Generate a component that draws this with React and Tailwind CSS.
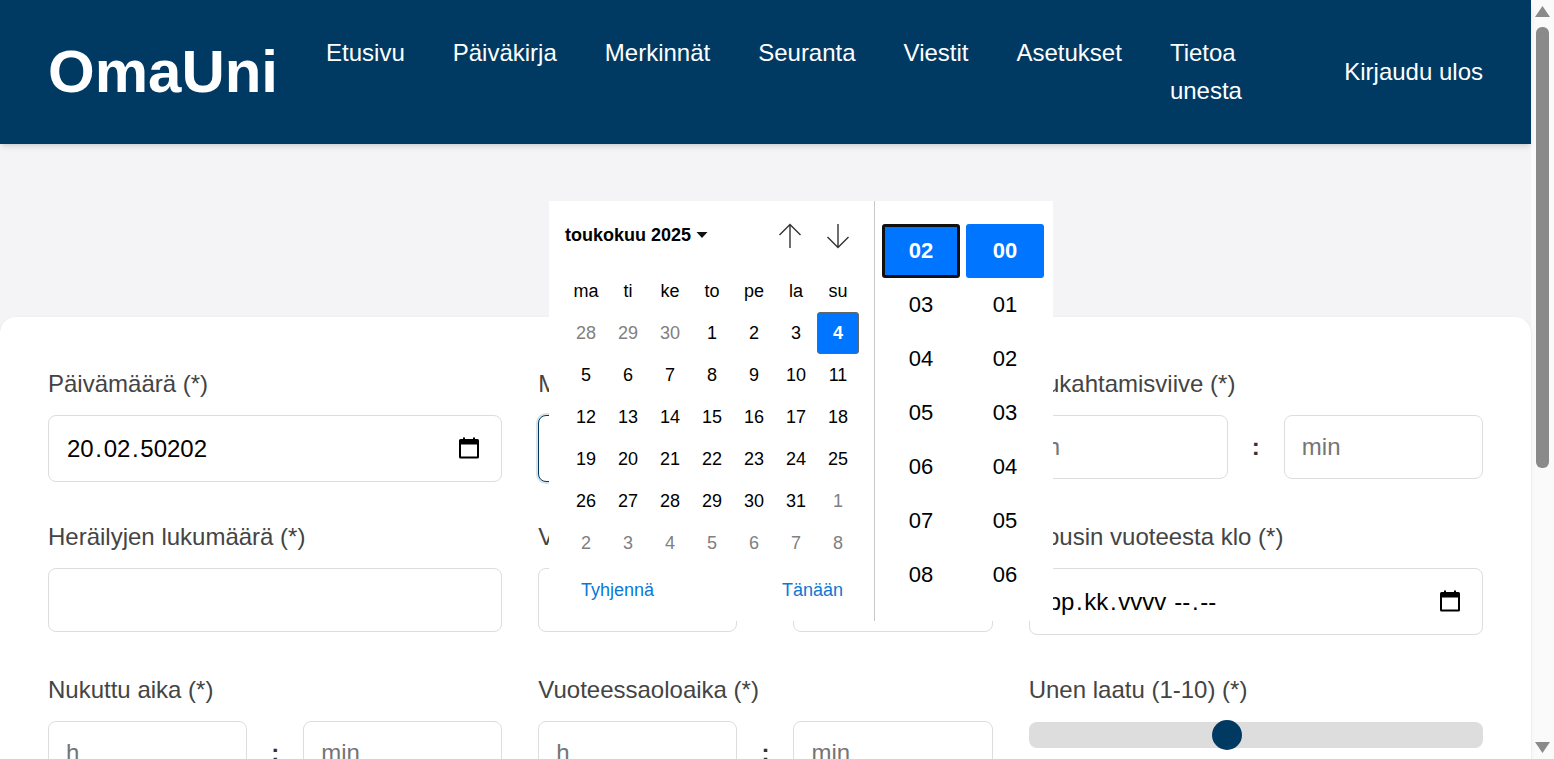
const navItems = ["Etusivu", "Päiväkirja", "Merkinnät", "Seuranta", "Viestit", "Asetukset"];
const weekdays = ["ma", "ti", "ke", "to", "pe", "la", "su"];
const days = [
  [28, true], [29, true], [30, true], [1], [2], [3], [4],
  [5], [6], [7], [8], [9], [10], [11],
  [12], [13], [14], [15], [16], [17], [18],
  [19], [20], [21], [22], [23], [24], [25],
  [26], [27], [28], [29], [30], [31], [1, true],
  [2, true], [3, true], [4, true], [5, true], [6, true], [7, true], [8, true],
];
const hours = ["02", "03", "04", "05", "06", "07", "08"];
const minutes = ["00", "01", "02", "03", "04", "05", "06"];

function CalendarIcon() {
  return (
    <svg width="24" height="24" viewBox="0 0 24 24" className="shrink-0 -mt-0.5">
      <path d="M7 1.500v2M17 1.500v2" stroke="#000" strokeWidth="2" fill="none" />
      <path
        d="M3.500 3h17A1.500 1.500 0 0 1 22 4.500V21a1.500 1.500 0 0 1-1.500 1.500h-17A1.500 1.500 0 0 1 2 21V4.500A1.500 1.500 0 0 1 3.500 3ZM4 8.500V20.500H20V8.500Z"
        fill="#000"
        fillRule="evenodd"
      />
    </svg>
  );
}

function Label({ children }) {
  return <label className="block h-[38px] mb-3 text-2xl leading-[38px] text-[#444] whitespace-nowrap">{children}</label>;
}

function TextInput({ placeholder }) {
  return (
    <input
      placeholder={placeholder}
      className="w-full min-w-0 h-16 px-[17px] bg-white border border-[#ddd] rounded-lg text-2xl placeholder:text-[#757575] outline-none"
    />
  );
}

function TimePair() {
  return (
    <div className="flex items-center gap-6">
      <TextInput placeholder="h" />
      <span className="shrink-0 text-2xl font-bold text-[#333]">:</span>
      <TextInput placeholder="min" />
    </div>
  );
}

function DateField({ parts, time, focused }) {
  return (
    <div
      className={
        "flex items-center justify-between h-[67px] pl-[18px] pr-5 bg-white border rounded-lg text-2xl text-black " +
        (focused ? "border-[#003a63] ring-2 ring-[#003a63]/15" : "border-[#ddd]")
      }
    >
      <span className="whitespace-nowrap">
        {parts[0]}
        <span className="mx-[1.650px]">.</span>
        {parts[1]}
        <span className="mx-[1.650px]">.</span>
        {parts[2]}
        {time && (
          <span className="ml-2">
            --<span className="mx-[1.650px]">.</span>--
          </span>
        )}
      </span>
      <CalendarIcon />
    </div>
  );
}

function TimeColumn({ values, focused }) {
  return (
    <div className="w-[78px] flex flex-col items-stretch">
      {values.map((v, i) => (
        <div
          key={v}
          className={
            "h-[54px] shrink-0 flex items-center justify-center pb-0.5 text-[22px] rounded-[3px] " +
            (i === 0 ? "bg-[#0075ff] text-white font-bold " : "text-black ") +
            (i === 0 && focused ? "border-[3px] border-[#101010]" : "")
          }
        >
          {v}
        </div>
      ))}
    </div>
  );
}

function DatePopup() {
  return (
    <div className="absolute left-[549px] top-[201px] w-[504px] h-[420px] bg-white flex overflow-hidden">
      <div className="w-[326px] shrink-0 border-r border-[#c8c8c8] pl-4 pr-4 flex flex-col">
        <div className="h-[69px] flex items-center">
          <div className="flex items-center -mt-0.5">
            <span className="text-lg font-bold text-black">toukokuu 2025</span>
            <svg width="12" height="6" viewBox="0 0 12 6" className="ml-[5px]">
              <path d="M0.500 0h11L6 6Z" fill="#111" />
            </svg>
          </div>
          <div className="ml-auto flex gap-6 pr-2">
            <svg width="24" height="26" viewBox="0 0 24 26" fill="none" stroke="#333" strokeWidth="1.400">
              <path d="M12 25V1.500M1.500 12 12 1.500 22.500 12" />
            </svg>
            <svg width="24" height="26" viewBox="0 0 24 26" fill="none" stroke="#333" strokeWidth="1.400">
              <path d="M12 1v23.500M1.500 14 12 24.500 22.500 14" />
            </svg>
          </div>
        </div>
        <div className="grid grid-cols-[repeat(7,42px)] auto-rows-[42px] text-lg">
          {weekdays.map((d) => (
            <div key={d} className="flex items-center justify-center text-black">{d}</div>
          ))}
          {days.map(([n, muted], i) => (
            <div
              key={i}
              className={
                "flex items-center justify-center " +
                (i === 6
                  ? "bg-[#0075ff] text-white font-bold border border-[#666] rounded-[3px]"
                  : muted
                    ? "text-[#808080]"
                    : "text-black")
              }
            >
              {n}
            </div>
          ))}
        </div>
        <div className="flex justify-between pl-4 pr-[15px] mt-3 text-lg text-[#0a78d6]">
          <span>Tyhjennä</span>
          <span>Tänään</span>
        </div>
      </div>
      <div className="flex gap-1.5 pl-[7px] pt-[23px]">
        <TimeColumn values={hours} focused />
        <TimeColumn values={minutes} />
      </div>
    </div>
  );
}

export default function App() {
  return (
    <div className="relative flex h-[759px] overflow-hidden bg-[#fafafa] font-['Liberation_Sans',Arial,sans-serif]">
      <div className="w-[1531px] shrink-0 bg-[#f4f4f6]">
        <header className="relative h-36 px-12 flex items-center gap-12 bg-[#003a63] text-white shadow-md">
          <div className="text-[60px] font-bold leading-none">OmaUni</div>
          <nav className="flex items-start gap-12 text-2xl leading-[38px]">
            {navItems.map((item) => (
              <a key={item}>{item}</a>
            ))}
            <a className="w-min">Tietoa unesta</a>
          </nav>
          <a className="ml-auto text-2xl leading-[38px]">Kirjaudu ulos</a>
        </header>
        <main className="pt-[173px]">
          <div className="h-[600px] p-12 bg-white rounded-t-2xl shadow-sm">
            <div className="grid grid-cols-3 gap-x-9 gap-y-9 items-start">
              <div>
                <Label>Päivämäärä (*)</Label>
                <DateField parts={["20", "02", "50202"]} />
              </div>
              <div>
                <Label>Menin nukkumaan klo (*)</Label>
                <DateField parts={["pp", "kk", "vvvv"]} time focused />
              </div>
              <div>
                <Label>Nukahtamisviive (*)</Label>
                <TimePair />
              </div>
              <div>
                <Label>Heräilyjen lukumäärä (*)</Label>
                <TextInput />
              </div>
              <div>
                <Label>Valveillaoloaika (*)</Label>
                <TimePair />
              </div>
              <div>
                <Label>Nousin vuoteesta klo (*)</Label>
                <DateField parts={["pp", "kk", "vvvv"]} time />
              </div>
              <div>
                <Label>Nukuttu aika (*)</Label>
                <TimePair />
              </div>
              <div>
                <Label>Vuoteessaoloaika (*)</Label>
                <TimePair />
              </div>
              <div>
                <Label>Unen laatu (1-10) (*)</Label>
                <div className="pt-px">
                  <div className="relative h-[26px] bg-[#ddd] rounded-lg">
                    <span className="absolute left-[183px] top-[-2px] w-[30px] h-[30px] rounded-full bg-[#003a63]" />
                  </div>
                </div>
              </div>
            </div>
          </div>
        </main>
      </div>
      <div className="flex-1 flex flex-col items-center py-1.5">
        <svg width="15" height="11" viewBox="0 0 15 11"><path d="M7.500 0 15 11H0Z" fill="#8a8a8a" /></svg>
        <div className="w-[13px] h-[441px] mt-2.5 bg-[#8a8a8a] rounded-[6px]" />
        <svg width="15" height="11" viewBox="0 0 15 11" className="mt-auto"><path d="M0 0h15L7.500 11Z" fill="#8a8a8a" /></svg>
      </div>
      <DatePopup />
    </div>
  );
}
